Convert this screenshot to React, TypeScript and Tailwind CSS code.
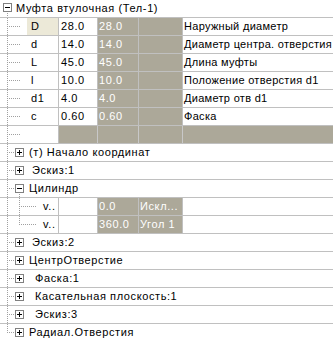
import React from "react";

const DOT = "#a0a0a0";

function VDots({ x, y1, y2 }: { x: number; y1: number; y2: number }) {
  const r = [];
  for (let y = y1; y <= y2; y += 2) r.push(<rect key={y} x={x} y={y} width={1} height={1} fill={DOT} />);
  return <>{r}</>;
}
function HDots({ y, x1, x2 }: { y: number; x1: number; x2: number }) {
  const r = [];
  for (let x = x1; x <= x2; x += 2) r.push(<rect key={x} x={x} y={y} width={1} height={1} fill={DOT} />);
  return <>{r}</>;
}
function Box({ x, y, plus }: { x: number; y: number; plus: boolean }) {
  return (
    <>
      <rect x={x + 0.5} y={y + 0.5} width={8} height={8} fill="#fff" stroke="#808080" />
      <rect x={x + 2} y={y + 4} width={5} height={1} fill="#000" />
      {plus && <rect x={x + 4} y={y + 2} width={1} height={5} fill="#000" />}
    </>
  );
}

const font = { fontFamily: '"Liberation Sans", Arial, sans-serif', letterSpacing: "0.6px" };

type P = { n: string; v: string; sel?: boolean; desc: string };
const params: P[] = [
  { n: "D", v: "28.0", sel: true, desc: "Наружный диаметр" },
  { n: "d", v: "14.0", desc: "Диаметр центра. отверстия" },
  { n: "L", v: "45.0", desc: "Длина муфты" },
  { n: "l", v: "10.0", desc: "Положение отверстия d1" },
  { n: "d1", v: "4.0", desc: "Диаметр отв d1" },
  { n: "c", v: "0.60", desc: "Фаска" },
];

function ParamGutter() {
  return (
    <svg width={27} height={17} className="shrink-0">
      <VDots x={7} y1={0} y2={16} />
      <HDots y={8} x1={9} x2={20} />
    </svg>
  );
}

function TreeRow({ text, plus, last, pad, minusChild }: { text: string; plus: boolean; last?: boolean; pad: number; minusChild?: boolean }) {
  return (
    <div className="flex h-[18px] border-b border-[#c0c0c0]">
      <svg width={27} height={17} className="shrink-0">
        <VDots x={7} y1={0} y2={last ? 8 : 16} />
        <HDots y={8} x1={9} x2={14} />
        <Box x={15} y={4} plus={plus} />
        {minusChild && <VDots x={19} y1={14} y2={16} />}
      </svg>
      <div className="leading-[17px] whitespace-nowrap" style={{ paddingLeft: pad }}>{text}</div>
    </div>
  );
}

export default function App() {
  return (
    <div className="w-[333px] h-[341px] overflow-hidden bg-white text-[11px] text-black" style={font}>
      {/* title */}
      <div className="flex h-[18px] border-b border-[#c0c0c0]">
        <svg width={16} height={17} className="shrink-0">
          <Box x={3} y={3} plus={false} />
          <VDots x={7} y1={13} y2={16} />
        </svg>
        <div className="leading-[17px] whitespace-nowrap">Муфта втулочная (Тел-1)</div>
      </div>
      {params.map((p) => (
        <div key={p.n} className="flex h-[18px] border-b border-[#c0c0c0] leading-[17px]">
          <ParamGutter />
          <div className={`w-[31px] shrink-0 pl-[4px] ${p.sel ? "bg-[#ece9d8]" : ""}`}>{p.n}</div>
          <div className="w-[39px] shrink-0 border-l border-[#c0c0c0] pl-[2px]">{p.v}</div>
          <div className="w-[41px] shrink-0 border-l border-[#c0c0c0] bg-[#aca899] text-white pl-[1px]">{p.v}</div>
          <div className="w-[44px] shrink-0 border-l border-[#c0c0c0] bg-[#aca899]"></div>
          <div className="flex-1 min-w-0 border-l border-[#c0c0c0] pl-[1px] whitespace-nowrap tracking-[0.3px]">{p.desc}</div>
        </div>
      ))}
      {/* empty row */}
      <div className="flex h-[18px] border-b border-[#c0c0c0]">
        <ParamGutter />
        <div className="w-[31px] shrink-0"></div>
        <div className="w-[39px] shrink-0 border-l border-[#c0c0c0] bg-[#aca899]"></div>
        <div className="w-[41px] shrink-0 border-l border-[#c8c8c8] bg-[#aca899]"></div>
        <div className="w-[44px] shrink-0 border-l border-[#c8c8c8] bg-[#aca899]"></div>
        <div className="flex-1 border-l border-[#c8c8c8] bg-[#aca899]"></div>
      </div>
      <TreeRow text="(т) Начало координат" plus pad={2} />
      <TreeRow text="Эскиз:1" plus pad={5} />
      <TreeRow text="Цилиндр" plus={false} pad={2} minusChild />
      {[
        { a: "0.0", b: "Искл..." },
        { a: "360.0", b: "Угол 1" },
      ].map((r, i) => (
        <div key={i} className="flex h-[18px] border-b border-[#c0c0c0] leading-[17px]">
          <svg width={40} height={17} className="shrink-0">
            <VDots x={7} y1={0} y2={16} />
            <VDots x={19} y1={0} y2={i === 1 ? 8 : 16} />
            <HDots y={8} x1={21} x2={35} />
          </svg>
          <div className="w-[18px] shrink-0 whitespace-nowrap pl-[3px]">v..</div>
          <div className="w-[39px] shrink-0 border-l border-[#c0c0c0]"></div>
          <div className="w-[41px] shrink-0 border-l border-[#c0c0c0] bg-[#aca899] text-white pl-[1px]">{r.a}</div>
          <div className="w-[44px] shrink-0 border-l border-[#c0c0c0] bg-[#aca899] text-white pl-[1px] whitespace-nowrap overflow-hidden">{r.b}</div>
          <div className="flex-1 border-l border-[#c0c0c0]"></div>
        </div>
      ))}
      <TreeRow text="Эскиз:2" plus pad={5} />
      <TreeRow text="ЦентрОтверстие" plus pad={2} />
      <TreeRow text="Фаска:1" plus pad={8} />
      <TreeRow text="Касательная плоскость:1" plus pad={8} />
      <TreeRow text="Эскиз:3" plus pad={8} />
      <TreeRow text="Радиал.Отверстия" plus pad={2} last />
    </div>
  );
}
